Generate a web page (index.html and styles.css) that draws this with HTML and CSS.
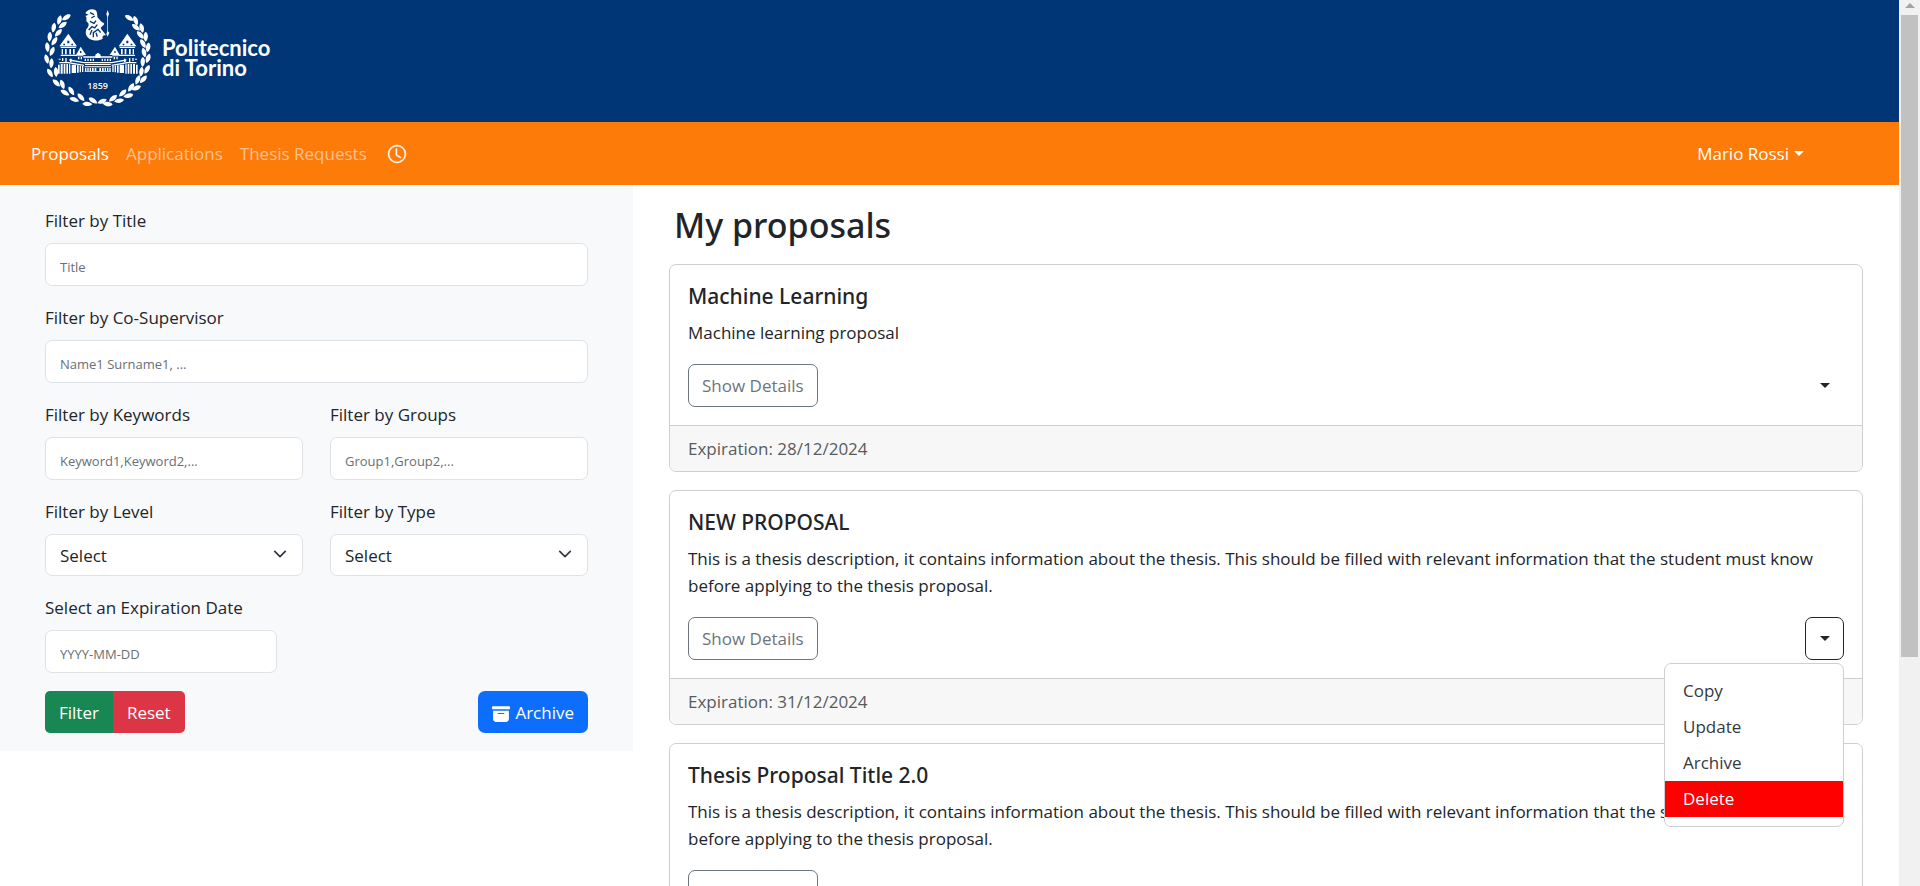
FILE: index.html
```html
<!DOCTYPE html>
<html lang="en">
<head>
<meta charset="utf-8">
<meta name="viewport" content="width=device-width, initial-scale=1">
<title>My proposals</title>
<link rel="stylesheet" href="styles.css">
</head>
<body class="app">
<div class="page">
  <header class="brand-bar">
    <svg class="brand-logo" viewBox="36 18 336 312" aria-hidden="true">
      <defs>
        <path id="leaf" d="M0 -15C10 -8 8 7 0 15C-8 7 -9 -8 0 -15Z"/>
        <g id="wing">
          <path d="M115 101L141 139H88Z" fill="#fff"/>
          <path d="M112 122h6v8h-6zM100 131h5v5h-5zM124 131h5v5h-5z" fill="#003576"/>
          <path d="M92 140h46v4H92zM95 147h4v16h-4zM105 147h5v16h-5zM118 147h5v16h-5zM129 147h5v16h-5zM92 164h50v4H92z" fill="#fff"/>
          <path d="M152 140L168 165H138Z" fill="#fff"/>
          <path d="M150 153h4v6h-4z" fill="#003576"/>
          <path d="M142 166h18v3h-18zM144 171h4v7h-4zM152 171h4v7h-4zM160 169h44v4h-44zM164 176h4v7h-4zM172 176h4v7h-4zM180 176h4v7h-4zM188 176h4v7h-4z" fill="#fff"/>
          <path d="M86 176h6v3h-6zM96 174h4v9h-4zM106 174h4v12h-4zM120 176h5v10h-5zM88 186h28l46 8v4l-48 -8H88z" fill="#fff"/>
          <path d="M118 178l44 8h42v4h-42l-44 -8zM165 192h39v3h-39z" fill="#fff"/>
          <path d="M84 194h5v27h-5zM92 192h6v29h-6zM101 192h5v29h-5zM109 192h5v29h-5zM117 193h4v28h-4zM125 194h13v25h-13zM141 196h5v22h-5zM149 197h4v20h-4zM156 198h4v18h-4z" fill="#fff"/>
          <path d="M164 199h40v3h-40zM165 204h4v11h-4zM172 204h4v11h-4zM179 204h4v11h-4zM186 204h5v11h-5zM194 204h5v11h-5zM164 213h40v2h-40z" fill="#fff"/>
        </g>
      </defs>
      <g fill="#fff">
        <use href="#leaf" transform="translate(109 52) rotate(58)"/>
        <use href="#leaf" transform="translate(88 60) rotate(15)"/>
        <use href="#leaf" transform="translate(98 75) rotate(52)"/>
        <use href="#leaf" transform="translate(71 83) rotate(10)"/>
        <use href="#leaf" transform="translate(85 98) rotate(42)"/>
        <use href="#leaf" transform="translate(59 110) rotate(4)"/>
        <use href="#leaf" transform="translate(73 124) rotate(32)"/>
        <use href="#leaf" transform="translate(52 142) rotate(-6)"/>
        <use href="#leaf" transform="translate(66 154) rotate(22)"/>
        <use href="#leaf" transform="translate(50 177) rotate(-15)"/>
        <use href="#leaf" transform="translate(64 190) rotate(4)"/>
        <use href="#leaf" transform="translate(60 219) rotate(-32)"/>
        <use href="#leaf" transform="translate(78 216) rotate(-4)"/>
        <use href="#leaf" transform="translate(79 249) rotate(-46)"/>
        <use href="#leaf" transform="translate(97 253) rotate(-20)"/>
        <use href="#leaf" transform="translate(105 278) rotate(-60)"/>
        <use href="#leaf" transform="translate(124 273) rotate(-32)"/>
        <use href="#leaf" transform="translate(133 299) rotate(-72)"/>
        <use href="#leaf" transform="translate(153 292) rotate(-42)"/>
        <use href="#leaf" transform="translate(172 312) rotate(-88)"/>
        <use href="#leaf" transform="translate(189 302) rotate(-58)"/>
        <use href="#leaf" transform="translate(298 54) rotate(-60)"/>
        <use href="#leaf" transform="translate(317 62) rotate(-20)"/>
        <use href="#leaf" transform="translate(318 82) rotate(-52)"/>
        <use href="#leaf" transform="translate(335 84) rotate(-14)"/>
        <use href="#leaf" transform="translate(331 105) rotate(-42)"/>
        <use href="#leaf" transform="translate(347 110) rotate(0)"/>
        <use href="#leaf" transform="translate(339 131) rotate(-30)"/>
        <use href="#leaf" transform="translate(354 142) rotate(10)"/>
        <use href="#leaf" transform="translate(342 158) rotate(-14)"/>
        <use href="#leaf" transform="translate(354 175) rotate(20)"/>
        <use href="#leaf" transform="translate(338 186) rotate(2)"/>
        <use href="#leaf" transform="translate(351 208) rotate(28)"/>
        <use href="#leaf" transform="translate(334 215) rotate(8)"/>
        <use href="#leaf" transform="translate(340 238) rotate(42)"/>
        <use href="#leaf" transform="translate(323 240) rotate(22)"/>
        <use href="#leaf" transform="translate(319 264) rotate(66)"/>
        <use href="#leaf" transform="translate(303 262) rotate(34)"/>
        <use href="#leaf" transform="translate(295 287) rotate(78)"/>
        <use href="#leaf" transform="translate(278 279) rotate(46)"/>
        <use href="#leaf" transform="translate(267 302) rotate(80)"/>
        <use href="#leaf" transform="translate(249 295) rotate(52)"/>
        <use href="#leaf" transform="translate(233 312) rotate(96)"/>
        <use href="#leaf" transform="translate(216 304) rotate(66)"/>
      </g>
      <use href="#wing"/>
      <use href="#wing" transform="translate(407 0) scale(-1 1)"/>
      <path d="M196 164l8 -6l8 6v10h-16z" fill="#fff"/>
      <path d="M166 40C172 28 186 25 196 30C204 36 200 46 204 54C210 58 212 66 222 70C224 76 216 78 212 84C216 92 224 98 228 106C220 104 216 108 218 116C206 124 188 122 178 116C166 108 166 98 169 88C176 80 178 74 174 68C164 64 174 54 166 48L176 44Z" fill="#fff"/>
      <path d="M180 38l12 6M184 54l10 -6M180 64l12 6l6 -8M176 90l10 -10l8 4l8 -10M180 104l6 -14M190 112l0 -14l14 -10l8 10M202 110l-4 -12" stroke="#003576" stroke-width="4" fill="none"/>
      <path d="M233 30l4 12l-3 8v44l4 4l-5 12l-4 -8l3 -8V52l-3 -10z" fill="#fff"/>
      <text class="logo-year" x="203" y="267" text-anchor="middle">1859</text>
    </svg>
    <div class="brand-name">Politecnico<br>di Torino</div>
  </header>

  <nav class="nav-bar">
    <a class="nav-link nav-link-active" href="#">Proposals</a>
    <a class="nav-link" href="#">Applications</a>
    <a class="nav-link" href="#">Thesis Requests</a>
    <button class="clock-button" type="button" aria-label="Virtual clock">
      <svg class="icon icon-clock" viewBox="0 0 16 16" fill="currentColor" aria-hidden="true"><path d="M8 3.500a.5.5 0 0 0-1 0V9a.5.5 0 0 0 .252.434l3.500 2a.5.5 0 0 0 .496-.868L8 8.710z"/><path d="M8 16A8 8 0 1 0 8 0a8 8 0 0 0 0 16m7-8A7 7 0 1 1 1 8a7 7 0 0 1 14 0"/></svg>
    </button>
    <button class="user-menu" type="button">Mario Rossi<span class="caret"></span></button>
  </nav>

  <div class="content">
    <form class="filters">
      <div class="field field-wide">
        <label for="f-title">Filter by Title</label>
        <input class="control" id="f-title" type="text" placeholder="Title">
      </div>
      <div class="field field-wide">
        <label for="f-sup">Filter by Co-Supervisor</label>
        <input class="control" id="f-sup" type="text" placeholder="Name1 Surname1, ...">
      </div>
      <div class="field">
        <label for="f-key">Filter by Keywords</label>
        <input class="control" id="f-key" type="text" placeholder="Keyword1,Keyword2,...">
      </div>
      <div class="field">
        <label for="f-group">Filter by Groups</label>
        <input class="control" id="f-group" type="text" placeholder="Group1,Group2,...">
      </div>
      <div class="field">
        <label for="f-level">Filter by Level</label>
        <div class="select-wrap">
          <select class="control select" id="f-level"><option>Select</option></select>
          <svg class="select-arrow" viewBox="0 0 16 16" aria-hidden="true"><path d="m2 5 6 6 6-6"/></svg>
        </div>
      </div>
      <div class="field">
        <label for="f-type">Filter by Type</label>
        <div class="select-wrap">
          <select class="control select" id="f-type"><option>Select</option></select>
          <svg class="select-arrow" viewBox="0 0 16 16" aria-hidden="true"><path d="m2 5 6 6 6-6"/></svg>
        </div>
      </div>
      <div class="field field-wide">
        <label for="f-date">Select an Expiration Date</label>
        <input class="control control-date" id="f-date" type="text" placeholder="YYYY-MM-DD">
      </div>
      <div class="filter-actions">
        <div class="button-group">
          <button class="btn btn-green" type="button">Filter</button>
          <button class="btn btn-red" type="button">Reset</button>
        </div>
        <button class="btn btn-blue" type="button">
          <svg class="icon icon-archive" viewBox="0 0 16 16" fill="currentColor" aria-hidden="true"><path d="M12.643 15C13.979 15 15 13.845 15 12.500V5H1v7.500C1 13.845 2.021 15 3.357 15zM5.500 7h5a.5.5 0 0 1 0 1h-5a.5.5 0 0 1 0-1M.8 1a.8.8 0 0 0-.8.8V3a.8.8 0 0 0 .8.8h14.400A.8.8 0 0 0 16 3V1.800a.8.8 0 0 0-.8-.8z"/></svg>
          Archive
        </button>
      </div>
    </form>

    <main class="proposals">
      <h1 class="heading">My proposals</h1>

      <article class="card">
        <div class="card-body">
          <h2 class="card-title">Machine Learning</h2>
          <p class="card-text">Machine learning proposal</p>
          <div class="card-actions">
            <button class="btn btn-outline" type="button">Show Details</button>
            <div class="dropdown">
              <button class="btn toggle" type="button" aria-label="Actions"><span class="caret"></span></button>
            </div>
          </div>
        </div>
        <div class="card-footer">Expiration: 28/12/2024</div>
      </article>

      <article class="card">
        <div class="card-body">
          <h2 class="card-title">NEW PROPOSAL</h2>
          <p class="card-text">This is a thesis description, it contains information about the thesis. This should be filled with relevant information that the student must know before applying to the thesis proposal.</p>
          <div class="card-actions">
            <button class="btn btn-outline" type="button">Show Details</button>
            <div class="dropdown">
              <button class="btn toggle toggle-open" type="button" aria-label="Actions" aria-expanded="true"><span class="caret"></span></button>
              <div class="menu">
                <a class="menu-item" href="#">Copy</a>
                <a class="menu-item" href="#">Update</a>
                <a class="menu-item" href="#">Archive</a>
                <a class="menu-item menu-item-danger" href="#">Delete</a>
              </div>
            </div>
          </div>
        </div>
        <div class="card-footer">Expiration: 31/12/2024</div>
      </article>

      <article class="card">
        <div class="card-body">
          <h2 class="card-title">Thesis Proposal Title 2.0</h2>
          <p class="card-text">This is a thesis description, it contains information about the thesis. This should be filled with relevant information that the student must know before applying to the thesis proposal.</p>
          <div class="card-actions">
            <button class="btn btn-outline" type="button">Show Details</button>
            <div class="dropdown">
              <button class="btn toggle" type="button" aria-label="Actions"><span class="caret"></span></button>
            </div>
          </div>
        </div>
      </article>
    </main>
  </div>
</div>

<div class="scrollbar" aria-hidden="true">
  <svg class="scroll-arrow" viewBox="0 0 10 5"><path d="M5 0L10 5H0Z"/></svg>
  <div class="scroll-track"><div class="scroll-thumb"></div></div>
</div>
</body>
</html>
```
FILE: styles.css
```css
* { box-sizing: border-box; }

.app {
  margin: 0;
  height: 100vh;
  overflow: hidden;
  display: grid;
  grid-template-columns: minmax(0, 1fr) 21px;
  background: #fff;
  color: #212529;
  font: 17px/27px "Open Sans", "Noto Sans", sans-serif;
}

button, input, select { font: inherit; color: inherit; }
button { cursor: pointer; }

.page { height: 100vh; overflow: hidden; }

/* Brand bar */
.brand-bar {
  display: flex;
  align-items: flex-start;
  gap: 8px;
  height: 122px;
  padding: 6px 42px;
  background: #003576;
}
.brand-logo { width: 112px; height: 104px; }
.logo-year { font: 600 27px "Open Sans", sans-serif; fill: #fff; }
.brand-name {
  padding-top: 32px;
  color: #fff;
  font: 700 22px/20px "Lato", sans-serif;
}

/* Navigation */
.nav-bar {
  display: flex;
  align-items: center;
  gap: 17px;
  height: 63px;
  padding: 0 95px 0 31px;
  background: #fd7b09;
}
.nav-link { color: rgba(255, 255, 255, .55); text-decoration: none; }
.nav-link-active { color: #fff; }
.clock-button {
  display: flex;
  margin-left: 4px;
  padding: 0;
  border: 0;
  background: none;
  color: #fff;
}
.user-menu {
  display: flex;
  align-items: center;
  gap: 5px;
  margin-left: auto;
  padding: 0;
  border: 0;
  background: none;
  color: #fff;
}
.icon { width: 18px; height: 18px; }
.icon-clock { overflow: visible; stroke: currentColor; stroke-width: .4; }
.caret {
  border: 5px solid transparent;
  border-top-color: currentColor;
  border-bottom: 0;
}

/* Columns */
.content {
  display: grid;
  grid-template-columns: 1fr 2fr;
  align-items: start;
}

/* Filters */
.filters {
  display: grid;
  grid-template-columns: 1fr 1fr;
  gap: 18px 27px;
  padding: 22px 45px 18px;
  background: #f8f9fb;
}
.field { display: flex; flex-direction: column; gap: 9px; }
.field-wide, .filter-actions { grid-column: 1 / -1; }
.control {
  width: 100%;
  height: 43px;
  padding: 2px 14px 0;
  border: 1px solid #dee2e6;
  border-radius: 7px;
  background: #fff;
}
.control::placeholder { color: #6a6f74; font-size: 13px; }
.control-date { width: 232px; }
.select-wrap { position: relative; }
.select {
  display: block;
  height: 42px;
  padding: 0 10px 0 14px;
  appearance: none;
}
.select-arrow {
  position: absolute;
  top: 13px;
  right: 16px;
  width: 14px;
  height: 14px;
  fill: none;
  stroke: #343a40;
  stroke-width: 2;
  stroke-linecap: round;
  stroke-linejoin: round;
  pointer-events: none;
}
.filter-actions { display: flex; justify-content: space-between; }
.button-group { display: flex; }

.btn {
  display: flex;
  align-items: center;
  justify-content: center;
  gap: 5px;
  height: 42px;
  padding: 0 13px;
  border: 1px solid transparent;
  border-radius: 7px;
  background: none;
}
.btn-green { background: #198754; color: #fff; border-radius: 5px 0 0 5px; }
.btn-red { background: #dc3545; color: #fff; border-radius: 0 5px 5px 0; }
.btn-blue { background: #0d6efd; color: #fff; }
.icon-archive { margin-top: 3px; }
.btn-outline { border-color: #6c757d; color: #6c757d; }

/* Proposals */
.proposals {
  display: flex;
  flex-direction: column;
  gap: 18px;
  padding: 20px 36px;
}
.heading {
  margin: 0;
  padding: 0 5px;
  font: 500 34px/41px "Noto Sans", sans-serif;
}
.card { border: 1px solid #cfcfcf; border-radius: 7px; }
.card-body { padding: 18px; }
.card-title {
  margin: 0 0 9px;
  font: 500 21px/27px "Noto Sans", sans-serif;
}
.card-text { margin: 0 0 18px; }
.card-actions { display: flex; justify-content: space-between; }
.card-actions .btn { height: 43px; }
.card-footer {
  padding: 9px 18px;
  border-top: 1px solid #cfcfcf;
  border-radius: 0 0 6px 6px;
  background: #f7f7f7;
  color: #585b5e;
}

.dropdown { position: relative; }
.toggle { width: 39px; }
.toggle-open { border-color: #212529; }
.menu {
  position: absolute;
  z-index: 2;
  top: 100%;
  right: 0;
  width: 180px;
  margin-top: 3px;
  padding: 9px 0;
  border: 1px solid #cfcfcf;
  border-radius: 7px;
  background: #fff;
}
.menu-item {
  display: block;
  padding: 4px 18px 5px;
  color: #35393d;
  text-decoration: none;
}
.menu-item-danger { background: #f00; color: #fff; }

/* Scrollbar */
.scrollbar {
  display: flex;
  flex-direction: column;
  height: 100vh;
  padding: 3px 2px 15px;
  gap: 7px;
  background: #f1f1f1;
}
.scroll-arrow { align-self: center; width: 10px; height: 5px; fill: #a3a3a3; }
.scroll-track { flex: 1; }
.scroll-thumb { height: 75%; background: #c1c1c1; }
```
